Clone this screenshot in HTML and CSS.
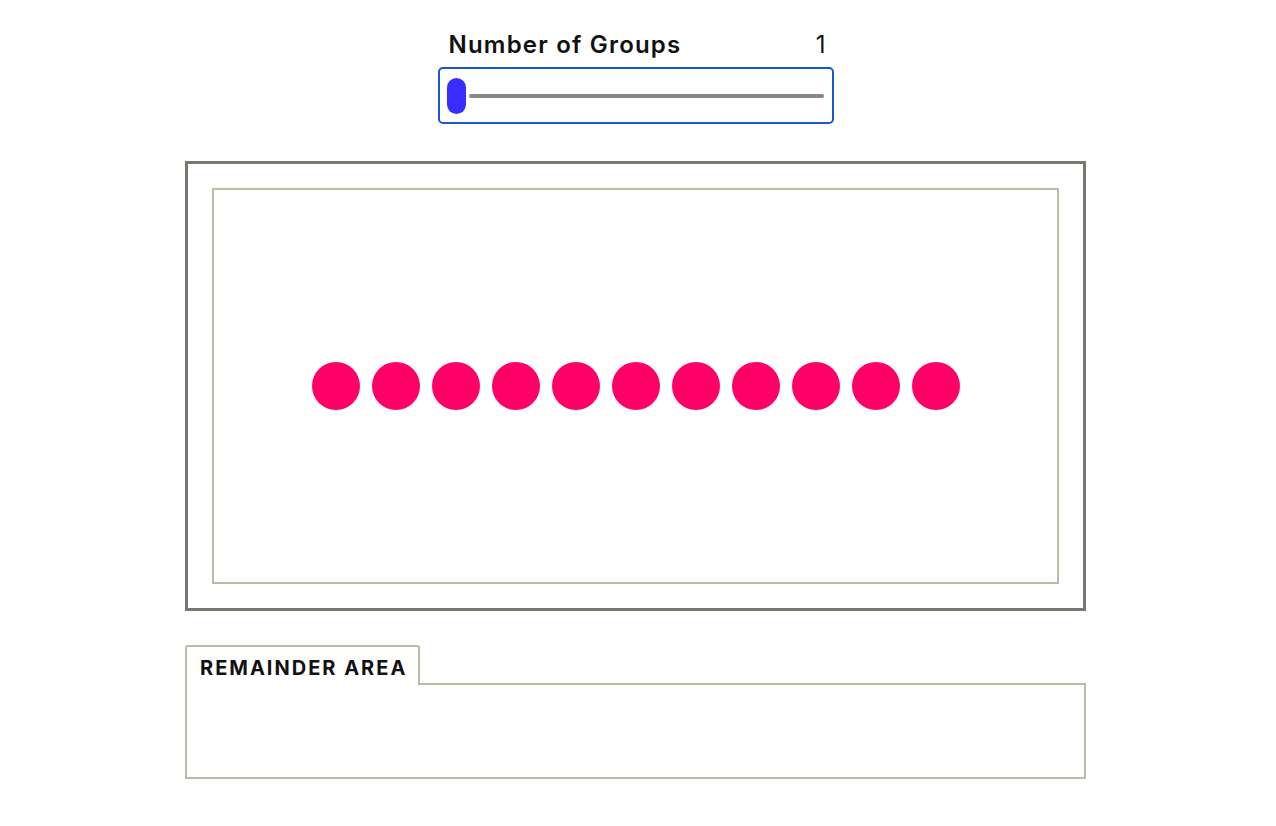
FILE: index.html
```html
<!DOCTYPE html>
<html>
<head>
<meta charset="utf-8">
<link rel="stylesheet" href="styles.css">
</head>
<body>
<div class="page">
  <div class="control">
    <div class="label-row">
      <span class="label">Number of Groups</span>
      <span class="value">1</span>
    </div>
    <div class="slider">
      <div class="thumb"></div>
      <div class="track"></div>
    </div>
  </div>
  <div class="stage">
    <div class="stage-inner">
      <div class="dots">
        <span class="dot"></span><span class="dot"></span><span class="dot"></span><span class="dot"></span><span class="dot"></span><span class="dot"></span><span class="dot"></span><span class="dot"></span><span class="dot"></span><span class="dot"></span><span class="dot"></span>
      </div>
    </div>
  </div>
  <div class="remainder">
    <div class="tab">REMAINDER AREA</div>
    <div class="remainder-box"></div>
  </div>
</div>
</body>
</html>
```
FILE: styles.css
```css
html, body {
  margin: 0;
  padding: 0;
  background: #ffffff;
}
body {
  font-family: Inter, "Liberation Sans", sans-serif;
  color: #111111;
}
.page {
  width: 901px;
  margin-left: 185px;
  padding-top: 30px;
}
.control {
  width: 396px;
  margin: 0 auto;
}
.label-row {
  display: flex;
  justify-content: space-between;
  align-items: baseline;
  padding: 0 8px 0 11px;
  height: 30px;
  line-height: 30px;
  margin-bottom: 7px;
  font-size: 24px;
}
.label {
  font-weight: 600;
  letter-spacing: 1.2px;
}
.value {
  font-weight: 400;
}
.slider {
  box-sizing: border-box;
  height: 57px;
  border: 2px solid #1857cc;
  border-radius: 5px;
  display: flex;
  align-items: center;
  padding: 0 8px 0 7px;
  gap: 3px;
}
.thumb {
  width: 19px;
  height: 36px;
  border-radius: 10px;
  background: #3a2bff;
  flex: none;
}
.track {
  flex: 1;
  height: 4px;
  border-radius: 2px;
  background: #878a82;
}
.stage {
  box-sizing: border-box;
  margin-top: 37px;
  height: 450px;
  border: 3px solid #77786f;
  padding: 24px;
}
.stage-inner {
  box-sizing: border-box;
  height: 396px;
  border: 2px solid #b9baa9;
  display: flex;
  align-items: center;
  justify-content: center;
}
.dots {
  display: flex;
  gap: 12px;
}
.dot {
  width: 48px;
  height: 48px;
  border-radius: 50%;
  background: #ff0066;
}
.remainder {
  margin-top: 34px;
}
.tab {
  box-sizing: border-box;
  width: 235px;
  height: 40px;
  border: 2px solid #b9baa9;
  border-bottom: none;
  border-radius: 3px 3px 0 0;
  padding-left: 13px;
  padding-top: 10px;
  font-size: 20px;
  font-weight: 700;
  letter-spacing: 2px;
  line-height: 22px;
  position: relative;
  z-index: 1;
  background: #ffffff;
  margin-bottom: -2px;
  white-space: nowrap;
}
.remainder-box {
  box-sizing: border-box;
  height: 96px;
  border: 2px solid #b9baa9;
}
```
